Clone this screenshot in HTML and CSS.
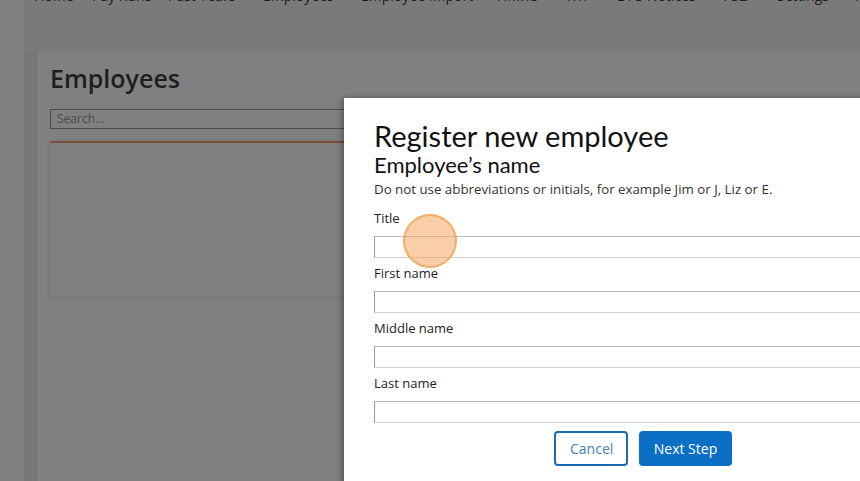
FILE: index.html
```html
<!DOCTYPE html>
<html lang="en">
<head>
  <meta charset="UTF-8">
  <meta name="viewport" content="width=device-width, initial-scale=1.0">
  <title>Employees</title>
  <link rel="stylesheet" href="styles.css">
</head>
<body>
  <div class="page">
    <div class="gutter"></div>
    <div class="main">
      <nav class="nav">
        <a>Home</a>
        <a>Pay Runs</a>
        <a>Past Years</a>
        <a>Employees</a>
        <a>Employee Import</a>
        <a>HMRC</a>
        <a>RTI</a>
        <a>DPS Notices</a>
        <a>P32</a>
        <a>Settings</a>
        <a>Help</a>
      </nav>
      <div class="panel">
        <h1 class="panel-title">Employees</h1>
        <div class="search-row">
          <input class="search" type="text" placeholder="Search...">
        </div>
        <div class="list-card"></div>
      </div>
    </div>
  </div>

  <!-- диалог поверх страницы -->
  <div class="modal">
    <h2 class="modal-title">Register new employee</h2>
    <h3 class="modal-sub">Employee’s name</h3>
    <p class="hint">Do not use abbreviations or initials, for example Jim or J, Liz or E.</p>

    <div class="field">
      <label>Title</label>
      <input type="text">
    </div>
    <div class="field">
      <label>First name</label>
      <input type="text">
    </div>
    <div class="field">
      <label>Middle name</label>
      <input type="text">
    </div>
    <div class="field">
      <label>Last name</label>
      <input type="text">
    </div>

    <div class="actions">
      <button class="btn btn-outline">Cancel</button>
      <button class="btn btn-primary">Next Step</button>
    </div>
  </div>

  <div class="click-dot"></div>
</body>
</html>
```

FILE: styles.css
```css
body {
  margin: 0;
  height: 481px;
  overflow: hidden;
  background-color: #808080;
  font-family: "Open Sans", Arial, sans-serif;
  color: #1e1e1e;
  position: relative;
}
.page {
  display: flex;
  height: 100%;
}
.gutter {
  flex: 0 0 24px;
  background-color: #808080;
}
.main {
  flex: 1;
  min-width: 0;
  overflow: hidden;
  background-color: #777;
  display: flex;
  flex-direction: column;
}
/* пункты меню уходят за верхний край, как на скриншоте */
.nav {
  display: grid;
  grid-template-columns: 58px 76px 95px 98px 136px 70px 50px 106px 54px 78px auto;
  padding-left: 10px;
  margin-top: -13px;
  height: 64px;
  flex-shrink: 0;
  background-color: #7a7a7a;
  font-size: 14px;
  line-height: 18px;
  white-space: nowrap;
  color: #1c1c1c;
}
.panel {
  flex: 1;
  margin-left: 14px;
  background-color: #808080;
  border-left: 1px solid #848484;
  padding: 0 11px;
}
.panel-title {
  margin: 10px 0 0;
  font-size: 25px;
  font-weight: 600;
  line-height: 34px;
  color: #1e1e1e;
}
.search-row {
  margin-top: 11px;
}
.search {
  width: 297px;
  height: 20px;
  box-sizing: border-box;
  border: 1px solid #4c4c4c;
  background: transparent;
  font-family: "Open Sans", Arial, sans-serif;
  font-size: 12px;
  padding: 0 6px;
  color: #444;
}
.search::placeholder {
  color: #4a4a4a;
}
.list-card {
  margin-top: 12px;
  height: 154px;
  border-top: 2px solid #7a4c3a;
  box-shadow: 0 1px 4px rgba(0, 0, 0, 0.12);
}

/* modal */
.modal {
  position: absolute;
  left: 344px;
  top: 98px;
  width: 538px;
  height: 400px;
  padding: 0 30px;
  background-color: #fff;
  box-shadow: -2px 0 6px rgba(0, 0, 0, 0.35);
}
.modal-title {
  margin: 22px 0 0;
  font-family: Lato, "Open Sans", sans-serif;
  font-weight: 400;
  font-size: 29px;
  line-height: 32px;
  color: #111;
}
.modal-sub {
  margin: 0;
  font-family: Lato, "Open Sans", sans-serif;
  font-weight: 400;
  font-size: 22px;
  line-height: 26px;
  color: #111;
}
.hint {
  margin: 2px 0 11px;
  font-size: 13.3px;
  line-height: 18px;
  color: #333;
}
.field {
  display: flex;
  flex-direction: column;
  margin-bottom: 6px;
}
.field label {
  font-size: 13px;
  line-height: 18px;
  color: #222;
  margin-bottom: 9px;
}
.field input {
  height: 22px;
  box-sizing: border-box;
  border: 1px solid #cfcfcf;
  border-left-color: #999;
  border-top-color: #bbb;
}
.actions {
  display: flex;
  justify-content: center;
  gap: 11px;
  margin-top: 8px;
}
.btn {
  height: 35px;
  box-sizing: border-box;
  border-radius: 4px;
  font-family: "Open Sans", Arial, sans-serif;
  font-size: 14px;
  padding: 0 14px;
  cursor: pointer;
}
.btn-outline {
  width: 74px;
  background: #fff;
  border: 2px solid #1b6bb0;
  color: #3f82bd;
}
.btn-primary {
  width: 93px;
  background: #0b6fc6;
  border: none;
  color: #fff;
}

.click-dot {
  position: absolute;
  left: 403px;
  top: 214px;
  width: 50px;
  height: 50px;
  border-radius: 50%;
  background: rgba(248, 165, 100, 0.55);
  border: 2px solid rgba(242, 160, 80, 0.75);
}
```
